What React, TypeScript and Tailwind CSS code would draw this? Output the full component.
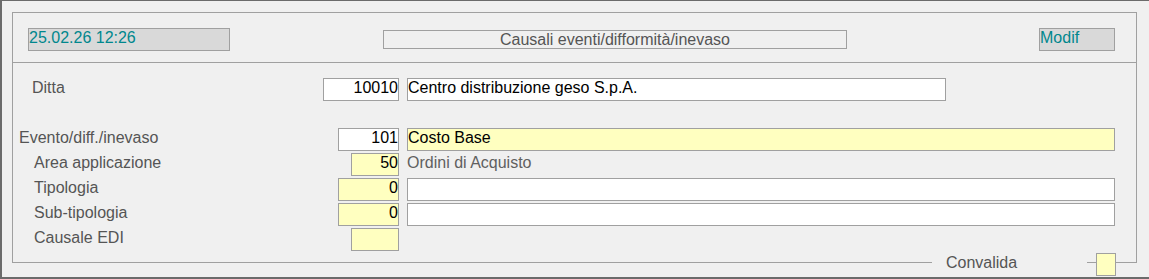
import React from 'react';

const font = { fontFamily: '"Liberation Sans", Arial, sans-serif' };

interface RowProps {
  label: string;
  labelPad: string;
  numWidth: string;
  num?: string;
  numBg: string;
  desc?: React.ReactNode;
}

// one form line: label on the left, numeric code right-aligned at x=398, then description
const FormRow: React.FC<RowProps> = ({ label, labelPad, numWidth, num, numBg, desc }) => (
  <div className="flex items-start h-[23px]">
    <div className="flex w-[386px] justify-between items-start">
      <span className={`${labelPad} pt-[1px] leading-[18px] text-[#555555] whitespace-nowrap`}>{label}</span>
      <div className={`${numWidth} ${numBg} h-[23px] border border-[#a0a0a0] text-right leading-[18px] text-black`}>
        {num}
      </div>
    </div>
    <div className="ml-[8px]">{desc}</div>
  </div>
);

export default function App() {
  return (
    <div
      className="w-[1149px] h-[279px] bg-[#f0f0f0] border-t border-l-2 border-b-2 border-[#6b6b6b] text-[16px]"
      style={font}
    >
      <div className="relative ml-[10px] mt-[11px] w-[1125px] h-[251px] border border-[#a0a0a0]">
        {/* header */}
        <div className="flex items-start h-[50px] pt-[15px] pl-[15px] border-b border-[#a0a0a0]">
          <div className="w-[202px] h-[23px] bg-[#d9d9d9] border border-[#a0a0a0] leading-[18px] text-[#00878d]">
            25.02.26 12:26
          </div>
          <div className="ml-[153px] mt-[2px] w-[464px] h-[19px] border border-[#a0a0a0] leading-[17px] text-center text-[#555555]">
            Causali eventi/difformità/inevaso
          </div>
          <div className="ml-[192px] w-[76px] h-[23px] bg-[#d9d9d9] border border-[#a0a0a0] leading-[18px] text-[#00878d]">
            Modif
          </div>
        </div>

        {/* body */}
        <div className="pt-[15px]">
          <FormRow
            label="Ditta"
            labelPad="pl-[19px]"
            numWidth="w-[76px]"
            num="10010"
            numBg="bg-white"
            desc={
              <div className="w-[539px] h-[23px] bg-white border border-[#a0a0a0] leading-[18px] text-black">
                Centro distribuzione geso S.p.A.
              </div>
            }
          />
          <div className="mt-[27px] flex flex-col gap-[2px]">
            <FormRow
              label="Evento/diff./inevaso"
              labelPad="pl-[6px]"
              numWidth="w-[61px]"
              num="101"
              numBg="bg-white"
              desc={
                <div className="w-[708px] h-[23px] bg-[#ffffc0] border border-[#a0a0a0] leading-[18px] text-black">
                  Costo Base
                </div>
              }
            />
            <FormRow
              label="Area applicazione"
              labelPad="pl-[21px]"
              numWidth="w-[48px]"
              num="50"
              numBg="bg-[#ffffc0]"
              desc={<div className="pt-[1px] leading-[18px] text-[#606060]">Ordini di Acquisto</div>}
            />
            <FormRow
              label="Tipologia"
              labelPad="pl-[21px]"
              numWidth="w-[61px]"
              num="0"
              numBg="bg-[#ffffc0]"
              desc={<div className="w-[708px] h-[23px] bg-white border border-[#a0a0a0]" />}
            />
            <FormRow
              label="Sub-tipologia"
              labelPad="pl-[21px]"
              numWidth="w-[61px]"
              num="0"
              numBg="bg-[#ffffc0]"
              desc={<div className="w-[708px] h-[23px] bg-white border border-[#a0a0a0]" />}
            />
            <FormRow label="Causale EDI" labelPad="pl-[21px]" numWidth="w-[48px]" numBg="bg-[#ffffc0]" />
          </div>
        </div>

        {/* legend sitting on the bottom border */}
        <span className="absolute left-[919px] top-[241px] w-[155px] h-[18px] pl-[14px] bg-[#f0f0f0] leading-[18px] text-[#555555]">
          Convalida
        </span>
        <div className="absolute left-[1083px] top-[240px] w-[20px] h-[23px] bg-[#ffffc0] border border-[#a0a0a0]" />
      </div>
    </div>
  );
}
